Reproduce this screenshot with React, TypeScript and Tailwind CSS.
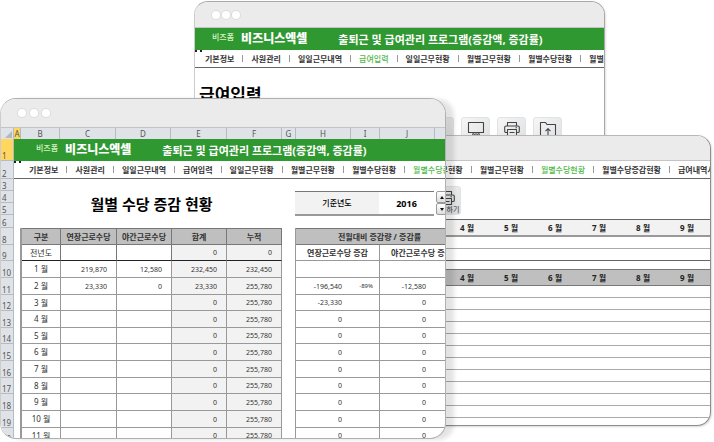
import { ReactNode } from "react";
import clsx from "clsx";

const menu = [
  "기본정보",
  "사원관리",
  "일일근무내역",
  "급여입력",
  "일일근무현황",
  "월별근무현황",
  "월별수당현황",
  "월별수당증감현황",
  "급여내역서",
];

const columns = [
  { name: "A", width: "w-[7px]" },
  { name: "B", width: "w-[39px]" },
  { name: "C", width: "w-[56px]" },
  { name: "D", width: "w-[55px]" },
  { name: "E", width: "w-[56px]" },
  { name: "F", width: "w-[55px]" },
  { name: "G", width: "w-[14px]" },
  { name: "H", width: "w-[55px]" },
  { name: "I", width: "w-[29px]" },
  { name: "J", width: "w-[55px]" },
  { name: "", width: "w-[29px]" },
];

const rowNumbers = [
  { no: 1, height: "h-[22px]" },
  { no: 2, height: "h-[18px]" },
  { no: 3, height: "h-[12px]" },
  { no: 4, height: "h-[12px]" },
  { no: 5, height: "h-[12px]" },
  { no: 6, height: "h-[13px]" },
  { no: 8, height: "h-[17px]" },
  { no: 9, height: "h-[16px]" },
  { no: 10, height: "h-[17px]" },
  { no: 11, height: "h-[17px]" },
  { no: 12, height: "h-[16px]" },
  { no: 13, height: "h-[17px]" },
  { no: 14, height: "h-[16px]" },
  { no: 15, height: "h-[17px]" },
  { no: 16, height: "h-[17px]" },
  { no: 17, height: "h-[16px]" },
  { no: 18, height: "h-[17px]" },
  { no: 19, height: "h-[17px]" },
  { no: 20, height: "h-[16px]" },
];

const months = [
  { label: "1 월", over: "219,870", night: "12,580", sum: "232,450", total: "232,450", height: "h-[17px]" },
  { label: "2 월", over: "23,330", night: "0", sum: "23,330", total: "255,780", height: "h-[17px]" },
  { label: "3 월", over: "", night: "", sum: "0", total: "255,780", height: "h-[16px]" },
  { label: "4 월", over: "", night: "", sum: "0", total: "255,780", height: "h-[17px]" },
  { label: "5 월", over: "", night: "", sum: "0", total: "255,780", height: "h-[16px]" },
  { label: "6 월", over: "", night: "", sum: "0", total: "255,780", height: "h-[17px]" },
  { label: "7 월", over: "", night: "", sum: "0", total: "255,780", height: "h-[17px]" },
  { label: "8 월", over: "", night: "", sum: "0", total: "255,780", height: "h-[16px]" },
  { label: "9 월", over: "", night: "", sum: "0", total: "255,780", height: "h-[17px]" },
  { label: "10 월", over: "", night: "", sum: "0", total: "255,780", height: "h-[17px]" },
  { label: "11 월", over: "", night: "", sum: "0", total: "255,780", height: "h-[16px]" },
];

const changes = [
  { over: "", rate: "", night: "", height: "h-[17px]" },
  { over: "-196,540", rate: "-89%", night: "-12,580", height: "h-[17px]" },
  { over: "-23,330", rate: "", night: "0", height: "h-[16px]" },
  { over: "0", rate: "", night: "0", height: "h-[17px]" },
  { over: "0", rate: "", night: "0", height: "h-[16px]" },
  { over: "0", rate: "", night: "0", height: "h-[17px]" },
  { over: "0", rate: "", night: "0", height: "h-[17px]" },
  { over: "0", rate: "", night: "0", height: "h-[16px]" },
  { over: "0", rate: "", night: "0", height: "h-[17px]" },
  { over: "0", rate: "", night: "0", height: "h-[17px]" },
  { over: "0", rate: "", night: "0", height: "h-[16px]" },
];

function BrowserWindow({ className, bar, children }: { className: string; bar: string; children: ReactNode }) {
  return (
    <section className={clsx("absolute flex flex-col overflow-hidden border bg-white", className)}>
      <div className={clsx("flex shrink-0 items-center border-b border-[#c4c4c4] bg-[#ebebeb]", bar)}>
        <span className="size-2 rounded-full bg-white ring-1 ring-[#dcdcdc]" />
        <span className="size-2 rounded-full bg-white ring-1 ring-[#dcdcdc]" />
        <span className="size-2 rounded-full bg-white ring-1 ring-[#dcdcdc]" />
      </div>
      {children}
    </section>
  );
}

function Banner({ className }: { className: string }) {
  return (
    <header className={clsx("flex h-[22px] shrink-0 items-center whitespace-nowrap bg-[#309830] leading-none", className)}>
      <span className="mb-1 text-[8px] font-medium text-[#d6f2c4]">비즈폼</span>
      <span className="ml-[7px] text-[12px] font-black text-white">비즈니스엑셀</span>
      <span className="ml-[31px] text-[11px] font-bold text-white">출퇴근 및 급여관리 프로그램(증감액, 증감률)</span>
    </header>
  );
}

function Menu({ active, className }: { active: string; className: string }) {
  return (
    <nav
      className={clsx(
        "relative flex h-[18px] shrink-0 items-center overflow-hidden whitespace-nowrap border-b border-[#666] text-[8px] leading-none",
        className
      )}
    >
      {menu.map((item, i) => (
        <div key={item} className="flex shrink-0 items-center">
          {i > 0 && <span className="mx-2 h-[7px] w-px bg-[#999]" />}
          <a href="#" className={item === active ? "font-medium text-[#4fb848]" : "font-bold text-[#333]"}>
            {item}
          </a>
        </div>
      ))}
    </nav>
  );
}

// bottom edge of the selected A1 cell
function CellCursor() {
  return <span className="absolute z-10 h-[2px] w-[7px] border-r-2 border-l-2 border-[#222]" />;
}

function ToolButton({ label, children }: { label: string; children?: ReactNode }) {
  return (
    <button
      type="button"
      aria-label={label}
      className="flex h-[29px] w-[29px] shrink-0 flex-col items-center rounded-[3px] border border-[#e2e2e2] bg-linear-to-br from-[#f6f6f6] to-[#dcdee1] pt-[3px]"
    >
      {children}
    </button>
  );
}

function Icon({ children }: { children: ReactNode }) {
  return (
    <svg viewBox="0 0 18 16" className="h-4 w-[18px] shrink-0" fill="none" stroke="#444" strokeWidth="1.1" strokeLinejoin="round">
      {children}
    </svg>
  );
}

function PrinterIcon() {
  return (
    <Icon>
      <path d="M4.5 5V1.5h9V5M4.5 11.500H3A1.300 1.300 0 0 1 1.700 10.200V6.300A1.300 1.300 0 0 1 3 5h12a1.300 1.300 0 0 1 1.300 1.300v3.900a1.300 1.300 0 0 1-1.300 1.300h-1.500" />
      <path d="M4.500 8.500h9v6h-9zM6.500 11.500h5M12.500 6.800h1.500" />
    </Icon>
  );
}

function SalaryWindow() {
  return (
    <BrowserWindow
      className="top-px right-[109px] left-[194px] h-[150px] rounded-t-[14px] border-[#a8a8a8] border-l-[#ccc] shadow-[1px_1px_2px_rgba(0,0,0,0.12)]"
      bar="h-[26px] gap-[2px] pl-[17px]"
    >
      <Banner className="pl-[17px]" />
      <CellCursorRow />
      <Menu active="급여입력" className="pl-[10px]" />
      <h2 className="mt-[17px] pl-1 text-[17px] leading-5 font-bold text-black">급여입력</h2>
      <div className="mt-3 flex gap-[7px] pl-[230px]">
        <ToolButton label="새로고침" />
        <ToolButton label="화면">
          <Icon>
            <path d="M1.500 1.500h15v10h-15zM6.500 11.500l-1 3M11.500 11.500l1 3M4 14.500h3l1-1.500h2l1 1.500h3" />
          </Icon>
        </ToolButton>
        <ToolButton label="인쇄">
          <PrinterIcon />
        </ToolButton>
        <ToolButton label="내보내기">
          <Icon>
            <path d="M6.500 14.500h-5v-13h5l1.500 2h8.500v11h-5M9 15V8M6.500 10.200 9 7.700l2.500 2.500" />
          </Icon>
        </ToolButton>
      </div>
    </BrowserWindow>
  );
}

function CellCursorRow() {
  return (
    <div className="relative h-0 shrink-0">
      <CellCursor />
    </div>
  );
}

function AllowanceWindow() {
  const heads = ["1 월", "2 월", "3 월", "4 월", "5 월", "6 월", "7 월", "8 월", "9 월"];
  const line = "h-3 border-b border-[#aaa]";
  return (
    <BrowserWindow
      className="top-[135px] right-[3px] bottom-4 left-[205px] rounded-[14px] border-[#8c8c8c] border-t-[#b8b8b8] shadow-[1px_1px_2px_rgba(0,0,0,0.15)]"
      bar="h-[25px] gap-[2px] pl-[17px]"
    >
      <Menu active="월별수당현황" className="pl-3" />
      <div className="flex h-10 shrink-0 items-start pt-[7px] pl-[226px]">
        <ToolButton label="인쇄하기">
          <PrinterIcon />
          <span className="text-[7px] leading-[8px] whitespace-nowrap text-[#333]">인쇄하기</span>
        </ToolButton>
      </div>
      <div className="border-t border-[#666]">
        <table className="w-full table-fixed border-separate border-spacing-0 text-[8px] leading-none">
          <thead>
            <tr className="bg-[#f2f2f2]">
              <th className="h-[17px] border-b-2 border-[#999]" />
              {heads.map((m) => (
                <th key={m} className="h-[17px] w-11 border-b-2 border-[#999] p-0 pr-[2px] text-[#222]">{m}</th>
              ))}
            </tr>
          </thead>
          <tbody>
            <tr><td colSpan={10} className={line} /></tr>
            <tr><td colSpan={10} className="h-3 border-b border-[#666]" /></tr>
            <tr><td colSpan={10} className="h-2" /></tr>
            <tr className="bg-[#bfbfbf]">
              <th className="h-[17px] border-y border-[#777]" />
              {heads.map((m) => (
                <th key={m} className="h-[17px] w-11 border-y border-[#777] p-0 pr-[2px] text-[#222]">{m}</th>
              ))}
            </tr>
            {Array.from({ length: 11 }, (_, i) => (
              <tr key={i}><td colSpan={10} className={line} /></tr>
            ))}
          </tbody>
        </table>
      </div>
    </BrowserWindow>
  );
}

function SummaryTable() {
  const head = "h-[17px] border-r border-b border-t border-[#777] p-0";
  const base = "border-r border-b border-[#999] p-0";
  const num = "pr-[9px] text-right text-[7px]";
  return (
    <table className="w-[262px] shrink-0 table-fixed border-separate border-spacing-0 border-l-2 border-[#999] text-[8px] leading-none text-[#333]">
      <colgroup>
        <col className="w-[39px]" />
        <col className="w-[56px]" />
        <col className="w-[55px]" />
        <col className="w-[55px]" />
        <col className="w-[55px]" />
      </colgroup>
      <thead>
        <tr className="bg-[#bfbfbf]">
          <th className={head}>구분</th>
          <th className={head}>연장근로수당</th>
          <th className={head}>야간근로수당</th>
          <th className={head}>합계</th>
          <th className={head}>누적</th>
        </tr>
      </thead>
      <tbody>
        <tr>
          <td className="h-4 border-r border-b border-[#222] border-r-[#777] p-0 text-center">전년도</td>
          <td className="h-4 border-r border-b border-[#222] border-r-[#777] p-0" />
          <td className="h-4 border-r border-b border-[#222] border-r-[#777] p-0" />
          <td className="h-4 border-r border-b border-[#222] border-r-[#999] bg-[#f2f2f2] p-0 pr-[9px] text-right text-[7px]">0</td>
          <td className="h-4 border-r border-b border-[#222] border-r-[#999] bg-[#f2f2f2] p-0 pr-[9px] text-right text-[7px]">0</td>
        </tr>
        {months.map((m) => (
          <tr key={m.label}>
            <td className={clsx(base, m.height, "text-center")}>{m.label}</td>
            <td className={clsx(base, num)}>{m.over}</td>
            <td className={clsx(base, num)}>{m.night}</td>
            <td className={clsx(base, num, "bg-[#f2f2f2]")}>{m.sum}</td>
            <td className={clsx(base, num, "bg-[#f2f2f2]")}>{m.total}</td>
          </tr>
        ))}
      </tbody>
    </table>
  );
}

function ChangeTable() {
  const base = "border-b border-[#999] p-0";
  return (
    <table className="w-[168px] shrink-0 table-fixed border-separate border-spacing-0 border-l border-[#999] text-[8px] leading-none text-[#333]">
      <colgroup>
        <col className="w-[55px]" />
        <col className="w-[29px]" />
        <col className="w-[55px]" />
        <col className="w-[28px]" />
      </colgroup>
      <thead>
        <tr>
          <th colSpan={4} className="h-[17px] border-y border-[#777] bg-[#bfbfbf] p-0">전월대비 증감량 / 증감률</th>
        </tr>
        <tr>
          <th colSpan={2} className="h-4 border-r border-b border-[#999] p-0 font-bold">연장근로수당 증감</th>
          <th colSpan={2} className="h-4 border-b border-[#999] p-0 font-bold">야간근로수당 증감</th>
        </tr>
      </thead>
      <tbody>
        {changes.map((c, i) => (
          <tr key={i}>
            <td className={clsx(base, c.height, "pr-[9px] text-right text-[7px]")}>{c.over}</td>
            <td className={clsx(base, "border-r pr-[6px] text-right text-[6px]")}>{c.rate}</td>
            <td className={clsx(base, "pr-[9px] text-right text-[7px]")}>{c.night}</td>
            <td className={base} />
          </tr>
        ))}
      </tbody>
    </table>
  );
}

function SpinButton({ label, path }: { label: string; path: string }) {
  return (
    <button
      type="button"
      aria-label={label}
      className="flex h-3 w-3 items-center rounded-[2px] border border-[#999] bg-linear-to-b from-white to-[#ddd] pl-[3px]"
    >
      <svg viewBox="0 0 4 3" className="h-[3px] w-1" fill="#111">
        <path d={path} />
      </svg>
    </button>
  );
}

function SheetWindow() {
  return (
    <BrowserWindow
      className="top-[98px] right-[268px] bottom-[3px] left-0 rounded-[16px] border-[#b0b0b0] border-l-[#ccc] shadow-[8px_1px_4px_rgba(0,0,0,0.11)]"
      bar="h-[29px] gap-[4px] pl-[17px]"
    >
      <div className="flex h-[11px] shrink-0 bg-[#dfe3e8] text-[8px] leading-[11px] text-[#555]">
        <span className="flex w-[13px] shrink-0 items-end justify-end border-r border-[#b5bbc3] p-px">
          <svg viewBox="0 0 7 7" className="size-[7px]" fill="#b2b8c0">
            <path d="M7 0v7H0z" />
          </svg>
        </span>
        {columns.map((c, i) => (
          <span
            key={i}
            className={clsx("shrink-0 border-r border-[#b5bbc3] text-center", c.width, c.name === "A" && "bg-[#ffd75e]")}
          >
            {c.name}
          </span>
        ))}
      </div>
      <div className="flex min-h-0 flex-1 overflow-hidden">
        <div className="w-[13px] shrink-0 text-[8px] leading-[9px] text-[#555]">
          {rowNumbers.map((r) => (
            <div
              key={r.no}
              className={clsx(
                "flex items-end border-r border-b border-[#b5bbc3] pl-px",
                r.height,
                r.no === 1 ? "bg-[#ffd75e]" : "bg-[#dfe3e8]"
              )}
            >
              {r.no}
            </div>
          ))}
        </div>
        <div className="min-w-0 flex-1 overflow-hidden">
          <Banner className="pl-[22px]" />
          <CellCursorRow />
          <Menu active="월별수당증감현황" className="pl-[15px]" />
          <div className="flex h-[49px] items-start pt-3">
            <h1 className="w-[275px] shrink-0 text-center text-[15px] leading-[26px] font-bold text-black">
              월별 수당 증감 현황
            </h1>
            <div className="ml-[6px] flex h-[25px] w-[139px] shrink-0 items-center border-t border-b-2 border-[#777] border-b-[#999]">
              <label htmlFor="year" className="flex h-full w-[84px] items-center justify-center bg-[#f2f2f2] text-[8px] font-medium">
                기준년도
              </label>
              <input id="year" defaultValue="2016" className="h-full w-[55px] text-center text-[9px] font-bold text-black outline-none" />
            </div>
            <div className="ml-[2px] flex shrink-0 flex-col">
              <SpinButton label="증가" path="M0 3 2 0l2 3z" />
              <SpinButton label="감소" path="M0 0h4L2 3z" />
            </div>
          </div>
          <div className="flex gap-[13px] pl-[6px]">
            <SummaryTable />
            <ChangeTable />
          </div>
        </div>
      </div>
    </BrowserWindow>
  );
}

export default function App() {
  return (
    <main className="relative h-screen overflow-hidden bg-white font-['Noto_Sans','Noto_Sans_CJK_KR',sans-serif]">
      <SalaryWindow />
      <AllowanceWindow />
      <SheetWindow />
    </main>
  );
}
